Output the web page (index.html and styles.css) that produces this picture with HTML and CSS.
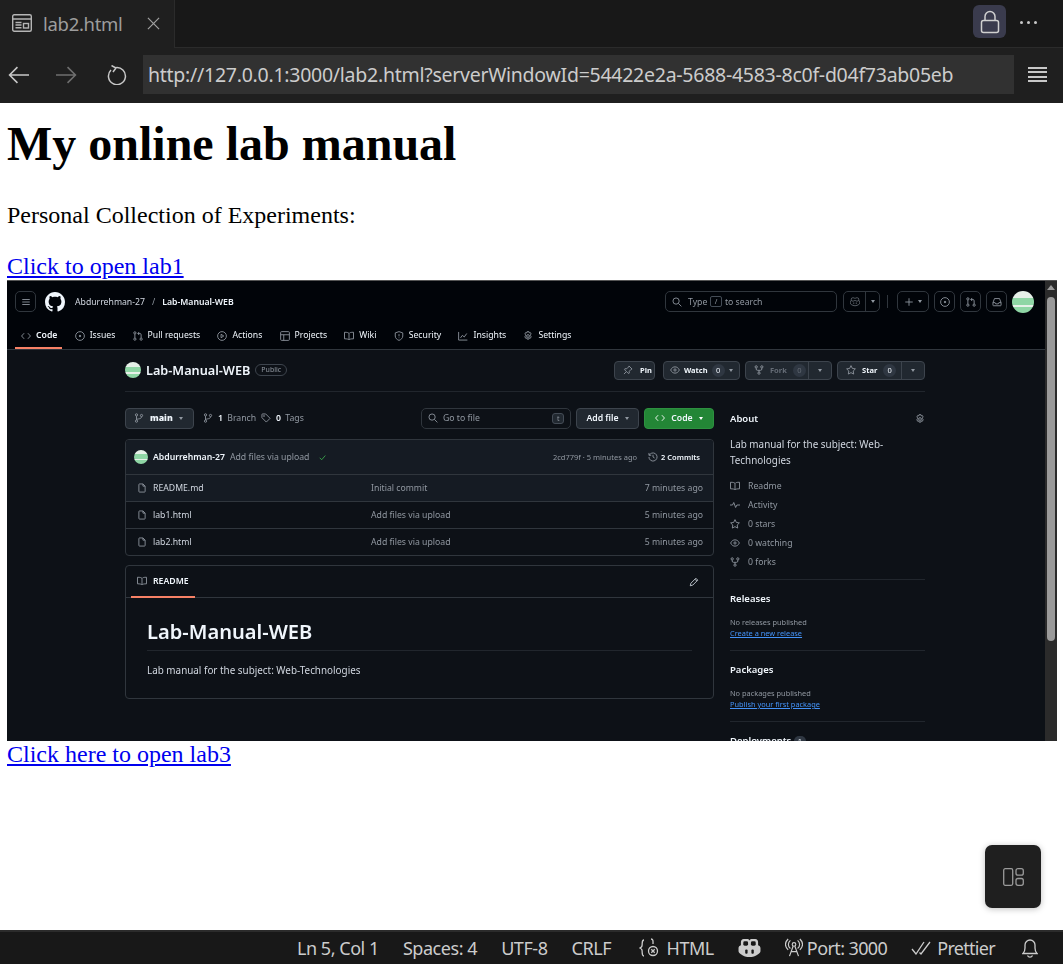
FILE: index.html
```html
<!DOCTYPE html>
<html lang="en">
<head>
    <meta charset="UTF-8">
    <meta name="viewport" content="width=device-width, initial-scale=1.0">
    <title>lab2.html</title>
    <link rel="stylesheet" href="styles.css">
</head>
<body>

<!-- icon sprite -->
<svg class="sprite" xmlns="http://www.w3.org/2000/svg">
    <symbol id="i-menu" viewBox="0 0 16 16"><path d="M2 4h12M2 8h12M2 12h12"/></symbol>
    <symbol id="i-code" viewBox="0 0 16 16"><path d="M5 3.5.9 8 5 12.5M11 3.5 15.1 8 11 12.5"/></symbol>
    <symbol id="i-issue" viewBox="0 0 16 16"><circle cx="8" cy="8" r="7"/><circle cx="8" cy="8" r="1.2" class="dot"/></symbol>
    <symbol id="i-pr" viewBox="0 0 16 16"><circle cx="3" cy="3" r="1.8"/><circle cx="3" cy="13" r="1.8"/><circle cx="13" cy="13" r="1.8"/><path d="M3 5v6M13 11V6a2 2 0 0 0-2-2H8M10 1.5 7.5 4l2.5 2.5"/></symbol>
    <symbol id="i-play" viewBox="0 0 16 16"><circle cx="8" cy="8" r="7"/><path d="M6.5 5.2 10.8 8l-4.3 2.8z"/></symbol>
    <symbol id="i-table" viewBox="0 0 16 16"><rect x="1" y="1" width="14" height="14" rx="1.5"/><path d="M1 6h14M6 6v9"/></symbol>
    <symbol id="i-book" viewBox="0 0 16 16"><path d="M8 4C7 2.5 5 2 .8 2v10.5c4 0 6 .5 7.2 1.5 1.2-1 3.2-1.5 7.2-1.5V2C11 2 9 2.5 8 4zM8 4v10"/></symbol>
    <symbol id="i-shield" viewBox="0 0 16 16"><path d="M8 1l6 2v5c0 3.5-3 6-6 7-3-1-6-3.5-6-7V3zM8 5v3.5M8 10.5v1"/></symbol>
    <symbol id="i-graph" viewBox="0 0 16 16"><path d="M1 1.5V14.5H15M4 11l3-4 3 2.5L14 4"/></symbol>
    <symbol id="i-gear" viewBox="0 0 16 16"><circle cx="8" cy="8" r="2.2"/><path d="M6.6 1h2.8l.5 2 1.8-.6 1.4 2.4-1.4 1.4v1.6l1.4 1.4-1.4 2.4-1.8-.6-.5 2H6.6l-.5-2-1.8.6-1.4-2.4 1.4-1.4V6.2L2.9 4.8l1.4-2.4 1.8.6z"/></symbol>
    <symbol id="i-search" viewBox="0 0 16 16"><circle cx="6.5" cy="6.5" r="5"/><path d="M10.3 10.3 15 15"/></symbol>
    <symbol id="i-pin" viewBox="0 0 16 16"><path d="M9.5 1.5l5 5-1.5.5-3 3v3l-1.5.5-6-6 .5-1.5h3l3-3zM5 11l-3.5 3.5"/></symbol>
    <symbol id="i-eye" viewBox="0 0 16 16"><path d="M1 8c2-4 4.5-5 7-5s5 1 7 5c-2 4-4.5 5-7 5s-5-1-7-5z"/><circle cx="8" cy="8" r="1.8"/></symbol>
    <symbol id="i-fork" viewBox="0 0 16 16"><circle cx="3.5" cy="3" r="1.8"/><circle cx="12.5" cy="3" r="1.8"/><circle cx="8" cy="13" r="1.8"/><path d="M3.5 5v1.5a2 2 0 0 0 2 2h5a2 2 0 0 0 2-2V5M8 8.5V11"/></symbol>
    <symbol id="i-star" viewBox="0 0 16 16"><path d="M8 1l2.2 4.5 4.8.7-3.5 3.4.8 4.9L8 12.2l-4.3 2.3.8-4.9L1 6.2l4.8-.7z"/></symbol>
    <symbol id="i-branch" viewBox="0 0 16 16"><circle cx="4" cy="3" r="1.8"/><circle cx="4" cy="13" r="1.8"/><circle cx="12" cy="4" r="1.8"/><path d="M4 5v6M12 6c0 3-3 3-5 3.5-1.5.4-3 .5-3 1.5"/></symbol>
    <symbol id="i-tag" viewBox="0 0 16 16"><path d="M1.5 2.5a1 1 0 0 1 1-1h5l7 7-6 6-7-7z"/><circle cx="4.8" cy="4.8" r=".7"/></symbol>
    <symbol id="i-file" viewBox="0 0 16 16"><path d="M3 2.5a1 1 0 0 1 1-1h5.500L13 5v8.500a1 1 0 0 1-1 1H4a1 1 0 0 1-1-1zM9.500 1.500V5H13"/></symbol>
    <symbol id="i-history" viewBox="0 0 16 16"><path d="M1.5 8a6.5 6.5 0 1 0 2-4.700L1.500 5.200M1.500 1.500v3.700h3.700M8 4.500V8l2.500 1.500"/></symbol>
    <symbol id="i-pencil" viewBox="0 0 16 16"><path d="M2 14l1-4 8-8 3 3-8 8zM9.500 3.500l3 3"/></symbol>
    <symbol id="i-pulse" viewBox="0 0 16 16"><path d="M0 8h4l2-4 3 8 2-4h5"/></symbol>
    <symbol id="i-check" viewBox="0 0 16 16"><path d="M3 8.500 6.500 12 13 4.500"/></symbol>
    <symbol id="i-copilot" viewBox="0 0 24 22"><path d="M6 1h3.500c1 0 2 .5 2.500 1.500.5-1 1.500-1.500 2.500-1.500H18c2 0 3 1.500 3 3.500v3c1.500.5 2.500 1.500 2.500 3v3c0 1.500-1 2.500-2.500 3.500-2.500 2-6 3-9 3s-6.500-1-9-3c-1.500-1-2.500-2-2.500-3.500v-3c0-1.500 1-2.500 2.500-3v-3C3 2.500 4 1 6 1zM3 7.500C5 9.500 10 9.500 12 6.500c2 3 7 3 9 1M9 12v4M15 12v4"/></symbol>
    <symbol id="i-inbox" viewBox="0 0 16 16"><path d="M1.5 9 4 2.500h8L14.500 9v4a1 1 0 0 1-1 1h-11a1 1 0 0 1-1-1zM1.500 9H5l1 2h4l1-2h3.500"/></symbol>
    <symbol id="i-plus" viewBox="0 0 16 16"><path d="M8 2v12M2 8h12"/></symbol>
</svg>

<header class="tabbar">
    <div class="tab">
        <svg class="tab-icon" viewBox="0 0 20 18"><rect x=".7" y=".7" width="18.6" height="16.6" rx="1.5"/><path d="M1 5h18M3.500 8.500h6M3.500 11h6M3.500 13.800h6"/><rect x="11.5" y="9.5" width="5" height="4.5"/></svg>
        <span class="tab-title">lab2.html</span>
        <svg class="tab-close" viewBox="0 0 14 14"><path d="M1 1l12 12M13 1 1 13"/></svg>
    </div>
    <div class="tab-fill">
        <button class="lock-btn">
            <svg viewBox="0 0 20 24"><rect x="1.5" y="10.5" width="17" height="12" rx="2"/><path d="M5 10.500V6.500a5 5 0 0 1 10 0v4"/></svg>
        </button>
        <div class="more-dots"><i></i><i></i><i></i></div>
    </div>
</header>

<nav class="toolbar">
    <svg class="nav-icon" viewBox="0 0 20 18"><path d="M20 9H1.500M9 1.500 1.500 9 9 16.500"/></svg>
    <svg class="nav-icon nav-off" viewBox="0 0 20 18"><path d="M0 9h18.500M11 1.500 18.500 9 11 16.500"/></svg>
    <svg class="nav-icon" viewBox="0 0 20 20"><path d="M3.500 5A8.500 8.500 0 1 0 8 2.700M4 .5 8.500 3 5.500 7"/></svg>
    <div class="url-box">http://127.0.0.1:3000/lab2.html?serverWindowId=54422e2a-5688-4583-8c0f-d04f73ab05eb</div>
    <div class="burger"><i></i><i></i><i></i><i></i></div>
</nav>

<main class="page">
    <h1>My online lab manual</h1>
    <p>Personal Collection of Experiments:</p>
    <a class="page-link" href="#">Click to open lab1</a>

    <!-- the embedded screenshot of the repository -->
    <div class="shot">
        <div class="gh">
            <div class="gh-head">
                <div class="gh-top">
                    <span class="square"><svg class="ic"><use href="#i-menu"/></svg></span>
                    <svg class="gh-logo" viewBox="0 0 16 16"><path d="M8 0c4.420 0 8 3.580 8 8a8.013 8.013 0 0 1-5.450 7.590c-.4.08-.55-.17-.55-.38 0-.27.01-1.130.01-2.200 0-.75-.25-1.230-.54-1.480 1.780-.2 3.650-.88 3.650-3.950 0-.88-.31-1.590-.82-2.150.08-.2.36-1.020-.08-2.120 0 0-.67-.22-2.200.82-.64-.18-1.320-.27-2-.27-.68 0-1.360.09-2 .27-1.530-1.030-2.200-.82-2.200-.82-.44 1.100-.16 1.920-.08 2.120-.51.56-.82 1.280-.82 2.150 0 3.060 1.860 3.750 3.640 3.950-.23.2-.44.55-.51 1.070-.46.21-1.610.55-2.330-.66-.15-.24-.6-.83-1.230-.82-.67.01-.27.38.01.53.34.19.73.9.82 1.130.16.45.68 1.310 2.690.94 0 .67.01 1.300.01 1.490 0 .21-.15.45-.55.38A7.995 7.995 0 0 1 0 8c0-4.420 3.580-8 8-8Z"/></svg>
                    <span class="crumb">Abdurrehman-27</span>
                    <span class="crumb-sep">/</span>
                    <span class="crumb crumb-repo">Lab-Manual-WEB</span>
                    <div class="top-right">
                        <div class="top-search"><svg class="ic"><use href="#i-search"/></svg><span>Type</span><kbd>/</kbd><span>to search</span></div>
                        <div class="split-btn"><span class="split-main"><svg class="ic"><use href="#i-copilot"/></svg></span><span class="split-drop"><i class="caret"></i></span></div>
                        <span class="top-divider"></span>
                        <span class="square square-plus"><svg class="ic"><use href="#i-plus"/></svg><i class="caret"></i></span>
                        <span class="square"><svg class="ic"><use href="#i-issue"/></svg></span>
                        <span class="square"><svg class="ic"><use href="#i-pr"/></svg></span>
                        <span class="square"><svg class="ic"><use href="#i-inbox"/></svg></span>
                        <span class="avatar avatar-big"></span>
                    </div>
                </div>
                <div class="gh-nav">
                    <span class="nav-item active"><svg class="ic"><use href="#i-code"/></svg>Code</span>
                    <span class="nav-item"><svg class="ic"><use href="#i-issue"/></svg>Issues</span>
                    <span class="nav-item"><svg class="ic"><use href="#i-pr"/></svg>Pull requests</span>
                    <span class="nav-item"><svg class="ic"><use href="#i-play"/></svg>Actions</span>
                    <span class="nav-item"><svg class="ic"><use href="#i-table"/></svg>Projects</span>
                    <span class="nav-item"><svg class="ic"><use href="#i-book"/></svg>Wiki</span>
                    <span class="nav-item"><svg class="ic"><use href="#i-shield"/></svg>Security</span>
                    <span class="nav-item"><svg class="ic"><use href="#i-graph"/></svg>Insights</span>
                    <span class="nav-item"><svg class="ic"><use href="#i-gear"/></svg>Settings</span>
                </div>
            </div>

            <div class="gh-wrap">
                <div class="repo-head">
                    <span class="avatar"></span>
                    <span class="repo-name">Lab-Manual-WEB</span>
                    <span class="badge">Public</span>
                    <div class="repo-actions">
                        <span class="rbtn rbtn-pin"><svg class="ic"><use href="#i-pin"/></svg>Pin</span>
                        <span class="rbtn rbtn-watch"><svg class="ic"><use href="#i-eye"/></svg>Watch<b class="count">0</b><i class="caret"></i></span>
                        <span class="rbtn rbtn-fork"><span class="rbtn-main"><svg class="ic"><use href="#i-fork"/></svg>Fork<b class="count">0</b></span><span class="rbtn-drop"><i class="caret"></i></span></span>
                        <span class="rbtn rbtn-star"><span class="rbtn-main"><svg class="ic"><use href="#i-star"/></svg>Star<b class="count">0</b></span><span class="rbtn-drop"><i class="caret"></i></span></span>
                    </div>
                </div>

                <div class="columns">
                    <div class="col-main">
                        <div class="branch-row">
                            <span class="btn btn-main"><svg class="ic"><use href="#i-branch"/></svg><strong>main</strong><i class="caret"></i></span>
                            <span class="meta meta-branch"><svg class="ic"><use href="#i-branch"/></svg><strong>1</strong> Branch</span>
                            <span class="meta"><svg class="ic"><use href="#i-tag"/></svg><strong>0</strong> Tags</span>
                            <div class="goto"><svg class="ic"><use href="#i-search"/></svg><span>Go to file</span><kbd>t</kbd></div>
                            <span class="btn btn-add">Add file<i class="caret"></i></span>
                            <span class="btn btn-code"><svg class="ic"><use href="#i-code"/></svg>Code<i class="caret"></i></span>
                        </div>

                        <div class="files">
                            <div class="commit-row">
                                <span class="avatar avatar-small"></span>
                                <span class="commit-user">Abdurrehman-27</span>
                                <span class="commit-msg">Add files via upload</span>
                                <svg class="ic ic-ok"><use href="#i-check"/></svg>
                                <span class="commit-hash">2cd779f · 5 minutes ago</span>
                                <span class="commit-count"><svg class="ic"><use href="#i-history"/></svg>2 Commits</span>
                            </div>
                            <div class="file-row file-row-lit">
                                <span class="file-name"><svg class="ic"><use href="#i-file"/></svg>README.md</span>
                                <span class="file-msg">Initial commit</span>
                                <span class="file-age">7 minutes ago</span>
                            </div>
                            <div class="file-row">
                                <span class="file-name"><svg class="ic"><use href="#i-file"/></svg>lab1.html</span>
                                <span class="file-msg">Add files via upload</span>
                                <span class="file-age">5 minutes ago</span>
                            </div>
                            <div class="file-row">
                                <span class="file-name"><svg class="ic"><use href="#i-file"/></svg>lab2.html</span>
                                <span class="file-msg">Add files via upload</span>
                                <span class="file-age">5 minutes ago</span>
                            </div>
                        </div>

                        <div class="readme">
                            <div class="readme-tabs">
                                <span class="readme-tab"><svg class="ic"><use href="#i-book"/></svg>README</span>
                                <svg class="ic ic-pencil"><use href="#i-pencil"/></svg>
                            </div>
                            <div class="readme-body">
                                <h2>Lab-Manual-WEB</h2>
                                <p>Lab manual for the subject: Web-Technologies</p>
                            </div>
                        </div>
                    </div>

                    <aside class="col-side">
                        <div class="about-head"><h3>About</h3><svg class="ic"><use href="#i-gear"/></svg></div>
                        <p class="about-text">Lab manual for the subject: Web-Technologies</p>
                        <ul class="about-list">
                            <li><svg class="ic"><use href="#i-book"/></svg>Readme</li>
                            <li><svg class="ic"><use href="#i-pulse"/></svg>Activity</li>
                            <li><svg class="ic"><use href="#i-star"/></svg>0 stars</li>
                            <li><svg class="ic"><use href="#i-eye"/></svg>0 watching</li>
                            <li><svg class="ic"><use href="#i-fork"/></svg>0 forks</li>
                        </ul>
                        <div class="side-block">
                            <h3>Releases</h3>
                            <small>No releases published</small>
                            <a href="#">Create a new release</a>
                        </div>
                        <div class="side-block">
                            <h3>Packages</h3>
                            <small>No packages published</small>
                            <a href="#">Publish your first package</a>
                        </div>
                        <div class="side-block">
                            <h3>Deployments <b class="count">1</b></h3>
                        </div>
                    </aside>
                </div>
            </div>
        </div>
        <div class="shot-scroll"><span class="shot-thumb"></span></div>
    </div>

    <a class="page-link" href="#">Click here to open lab3</a>

    <button class="float-btn">
        <svg viewBox="0 0 21 18"><rect x=".7" y=".7" width="9" height="16.6" rx="1.5"/><rect x="13" y=".7" width="7.3" height="6.5" rx="2"/><rect x="13" y="10.5" width="7.3" height="6.8" rx="2"/></svg>
    </button>
</main>

<footer class="statusbar">
    <span>Ln 5, Col 1</span>
    <span>Spaces: 4</span>
    <span>UTF-8</span>
    <span>CRLF</span>
    <span class="st-lang">
        <svg viewBox="0 0 20 22"><path d="M5 3C2.500 3 3.500 6 3 9c-.2 1-1 1.500-2 2 1 .5 1.800 1 2 2 .5 3-.5 6 2 6M12 2c2.500 0 2 2.500 2 5"/><circle cx="14" cy="14" r="4.500"/><path d="M12.300 12.300l3.400 3.400M15.700 12.300l-3.400 3.400"/></svg>
        HTML
    </span>
    <svg class="st-copilot" viewBox="0 0 24 22">
        <path d="M6 1h3.500c1 0 2 .5 2.500 1.500.5-1 1.500-1.500 2.500-1.500H18c2 0 3 1.500 3 3.500v3c1.500.5 2.500 1.500 2.500 3v3c0 1.500-1 2.500-2.500 3.500-2.500 2-6 3-9 3s-6.500-1-9-3c-1.500-1-2.500-2-2.500-3.500v-3c0-1.500 1-2.500 2.500-3v-3C3 2.500 4 1 6 1z"/>
        <rect class="st-hole" x="5.5" y="3.5" width="5" height="4.5" rx="1.5"/>
        <rect class="st-hole" x="13.5" y="3.5" width="5" height="4.5" rx="1.5"/>
        <rect class="st-hole" x="7.5" y="12" width="2.5" height="4.5" rx="1"/>
        <rect class="st-hole" x="14" y="12" width="2.5" height="4.5" rx="1"/>
    </svg>
    <span class="st-port">
        <svg viewBox="0 0 20 20"><circle cx="10" cy="6" r="2"/><path d="M9 8 5 19M11 8l4 11M7 14h6M6 1.500C3 4 3 8 6 10.500M14 1.500c3 2.500 3 6.500 0 9M3.500 0C-.5 4-.5 8 3.500 12M16.500 0c4 4 4 8 0 12"/></svg>
        Port: 3000
    </span>
    <span class="st-prettier">
        <svg viewBox="0 0 20 14"><path d="M1 8l4 5L13 1M8.500 11.500 10 13 19 1"/></svg>
        Prettier
    </span>
    <svg class="st-bell" viewBox="0 0 16 20"><path d="M1 15.500c1.500-1.500 2-3 2-5.500V7a5 5 0 0 1 10 0v3c0 2.500.5 4 2 5.500zM5.500 17.500a2.800 2.800 0 0 0 5 0"/></svg>
</footer>

</body>
</html>
```

FILE: styles.css
```css
* {
    box-sizing: border-box;
}
body {
    margin: 0;
    height: 100vh;
    display: flex;
    flex-direction: column;
    overflow: hidden;
    background: #fff;
    font-family: "Liberation Serif", serif;
}
.sprite {
    display: none;
}

/* editor chrome */
.tabbar {
    height: 48px;
    display: flex;
    background: #181818;
    font-family: "Noto Sans", sans-serif;
}
.tab {
    width: 175px;
    display: flex;
    align-items: center;
    padding: 0 0 2px 12px;
    background: #1f1f1f;
    border-right: 1px solid #2b2b2b;
}
.tab-icon {
    width: 20px;
    height: 18px;
    fill: none;
    stroke: #b5b5b5;
    stroke-width: 1.4;
}
.tab-title {
    margin-left: 11px;
    font-size: 18.5px;
    letter-spacing: -0.3px;
    color: #9d9d9d;
}
.tab-close {
    width: 13px;
    height: 13px;
    margin-left: 24px;
    fill: none;
    stroke: #a0a0a0;
    stroke-width: 1.3;
}
.tab-fill {
    flex: 1;
    display: flex;
    justify-content: flex-end;
    align-items: flex-start;
    border-bottom: 1px solid #2b2b2b;
    padding: 5px 26px 0 0;
}
.lock-btn {
    width: 33px;
    height: 33px;
    padding: 0;
    display: flex;
    align-items: center;
    justify-content: center;
    border: none;
    border-radius: 6px;
    background: #3a3b4d;
}
.lock-btn svg {
    width: 20px;
    height: 24px;
    fill: none;
    stroke: #d0d0d0;
    stroke-width: 1.5;
}
.more-dots {
    display: flex;
    gap: 4px;
    margin: 16px 0 0 14px;
}
.more-dots i {
    width: 3px;
    height: 3px;
    border-radius: 50%;
    background: #c8c8c8;
}
.toolbar {
    height: 55px;
    display: flex;
    align-items: center;
    padding: 0 16px 2px 8px;
    background: #1f1f1f;
}
.nav-icon {
    width: 21px;
    height: 20px;
    margin-right: 27px;
    flex: none;
    fill: none;
    stroke: #c8c8c8;
    stroke-width: 1.5;
}
.nav-off {
    margin-right: 30px;
    stroke: #6f6f6f;
}
.toolbar .nav-icon:nth-child(3) {
    margin-right: 15px;
}
.url-box {
    width: 871px;
    height: 39px;
    padding-left: 5px;
    line-height: 40px;
    white-space: nowrap;
    overflow: hidden;
    background: #313131;
    color: #cccccc;
    font-family: "Noto Sans", sans-serif;
    font-size: 19.5px;
    letter-spacing: -0.26px;
}
.burger {
    margin-left: 14px;
    width: 19px;
    display: flex;
    flex-direction: column;
    gap: 2.5px;
}
.burger i {
    height: 2px;
    background: #c8c8c8;
}

/* page content */
.page {
    position: relative;
    flex: 1;
    min-height: 0;
    padding: 13px 0 0 7px;
    background: #fff;
    color: #000;
}
.page h1 {
    margin: 0;
    font-size: 48px;
    font-weight: bold;
}
.page > p {
    margin: 31px 0 24px;
    font-size: 24px;
}
.page-link {
    display: block;
    width: max-content;
    font-size: 24px;
    color: #0000ee;
}

/* embedded screenshot */
.shot {
    width: 1050px;
    height: 461px;
    display: flex;
    overflow: hidden;
    border-top: 1px solid #555;
    background: #0d1117;
    color: #f0f6fc;
    font-family: "Noto Sans", sans-serif;
    font-size: 8.7px;
    filter: blur(0.25px);
}
.shot-scroll {
    width: 12px;
    flex: none;
    background: #2b2b2b;
}
.shot-scroll::before {
    content: "";
    display: block;
    width: 0;
    margin: 4px auto 0;
    border: 4px solid transparent;
    border-top: 0;
    border-bottom: 5px solid #9a9a9a;
}
.shot-thumb {
    display: block;
    width: 8px;
    height: 344px;
    margin: 7px 0 0 2px;
    border-radius: 4px;
    background: #9a9a9a;
}
.gh {
    flex: 1;
    min-width: 0;
}
.ic {
    width: 10px;
    height: 10px;
    flex: none;
    fill: none;
    stroke: #9198a1;
    stroke-width: 1.4;
}
.dot {
    fill: #9198a1;
}
.caret {
    flex: none;
    width: 0;
    height: 0;
    border: 2.5px solid transparent;
    border-top: 3px solid #9198a1;
    border-bottom: 0;
}
.gh-head {
    height: 69px;
    background: #010409;
    border-bottom: 1px solid #30363d;
}
.gh-top {
    height: 41px;
    display: flex;
    align-items: center;
    padding: 0 11px 0 8px;
}
.square {
    width: 21px;
    height: 21px;
    display: flex;
    align-items: center;
    justify-content: center;
    flex: none;
    border: 1px solid #30363d;
    border-radius: 5px;
}
.gh-logo {
    width: 20px;
    height: 20px;
    margin: 0 10px 0 9px;
    fill: #f0f6fc;
}
.crumb {
    color: #d1d7e0;
}
.crumb-sep {
    margin: 0 7px;
    color: #9198a1;
}
.crumb-repo {
    font-weight: 600;
    color: #f0f6fc;
}
.top-right {
    margin-left: auto;
    display: flex;
    align-items: center;
    gap: 5px;
}
.top-search {
    width: 172px;
    height: 21px;
    display: flex;
    align-items: center;
    gap: 3px;
    padding-left: 6px;
    border: 1px solid #30363d;
    border-radius: 5px;
    color: #9198a1;
}
.top-search .ic {
    margin-right: 3px;
}
kbd {
    font-family: "Noto Sans", sans-serif;
    font-size: 7px;
    border: 1px solid #444c56;
    border-radius: 2px;
    padding: 0 3.5px;
    color: #9198a1;
}
.split-btn {
    width: 37px;
    height: 21px;
    margin-left: 1px;
    display: flex;
    border: 1px solid #30363d;
    border-radius: 5px;
}
.split-main {
    width: 22px;
    display: flex;
    align-items: center;
    justify-content: center;
    border-right: 1px solid #30363d;
}
.split-drop {
    flex: 1;
    display: flex;
    align-items: center;
    justify-content: center;
}
.top-divider {
    width: 1px;
    height: 13px;
    margin: 0 4px 0 2px;
    background: #30363d;
}
.square-plus {
    width: 32px;
    gap: 4px;
}
.avatar {
    display: block;
    flex: none;
    width: 16px;
    height: 16px;
    border-radius: 50%;
    background: linear-gradient(#e6f0e8 0 30%, #8fd6a5 30% 62%, #e6f0e8 62% 72%, #8fd6a5 72%);
}
.avatar-big {
    width: 22px;
    height: 22px;
}
.avatar-small {
    width: 14px;
    height: 14px;
}
.gh-nav {
    height: 27px;
    display: flex;
    padding-left: 8px;
    gap: 6.2px;
}
.nav-item {
    display: flex;
    align-items: flex-start;
    gap: 5px;
    height: 27px;
    padding: 8px 5px 0 6px;
    color: #f0f6fc;
    white-space: nowrap;
    line-height: 11px;
}
.nav-item .ic {
    margin-top: .5px;
}
.nav-item.active {
    font-weight: 600;
    border-bottom: 2px solid #f78166;
}
.gh-wrap {
    padding: 0 120px 0 118px;
}
.repo-head {
    height: 42px;
    display: flex;
    align-items: center;
    border-bottom: 1px solid #21262d;
    padding-bottom: 1px;
}
.repo-name {
    margin-left: 5px;
    font-size: 12.7px;
    font-weight: 600;
}
.badge {
    margin-left: 5px;
    padding: 0 5px;
    font-size: 7px;
    line-height: 10px;
    border: 1px solid #3d444d;
    border-radius: 6px;
    color: #9198a1;
}
.repo-actions {
    margin-left: auto;
    display: flex;
    gap: 5px;
}
.rbtn {
    height: 19px;
    flex: none;
    display: flex;
    align-items: center;
    gap: 4px;
    padding: 0 6px;
    background: #212830;
    border: 1px solid #3d444d;
    border-radius: 4px;
    font-size: 7.5px;
    font-weight: 700;
}
.rbtn-pin {
    width: 41px;
    margin-right: 3px;
    gap: 7px;
    padding-left: 8px;
}
.rbtn-watch {
    width: 77px;
}
.rbtn-fork {
    width: 87px;
    padding: 0;
    gap: 0;
    color: #656c76;
}
.rbtn-star {
    width: 88px;
    padding: 0;
    gap: 0;
}
.rbtn-main {
    flex: 1;
    height: 100%;
    display: flex;
    align-items: center;
    gap: 6px;
    padding-left: 8px;
    border-right: 1px solid #3d444d;
}
.rbtn-drop {
    width: 22px;
    display: flex;
    justify-content: center;
}
.count {
    min-width: 13px;
    height: 13px;
    line-height: 13px;
    padding: 0 4px;
    text-align: center;
    border-radius: 7px;
    background: #2f3742;
    color: #f0f6fc;
    font-size: 7.5px;
    font-weight: 400;
}
.rbtn-fork .count {
    color: #656c76;
}
.columns {
    display: flex;
    justify-content: space-between;
}
.col-main {
    width: 589px;
    padding-top: 15px;
}
.branch-row {
    height: 22px;
    display: flex;
    align-items: center;
}
.btn {
    height: 21px;
    display: flex;
    align-items: center;
    gap: 6px;
    padding: 0 8px;
    border: 1px solid #3d444d;
    border-radius: 4px;
    background: #212830;
    font-weight: 600;
}
.btn-main {
    width: 69px;
}
.meta {
    display: flex;
    align-items: center;
    gap: 5px;
    color: #9198a1;
    white-space: pre;
}
.meta strong {
    margin-right: -3px;
    color: #f0f6fc;
    font-weight: 600;
}
.meta-branch {
    margin: 0 5px 0 9px;
}
.goto {
    margin-left: auto;
    width: 150px;
    height: 21px;
    display: flex;
    align-items: center;
    gap: 5px;
    padding: 0 6px;
    border: 1px solid #30363d;
    border-radius: 5px;
    color: #9198a1;
}
.goto kbd {
    margin-left: auto;
    background: #212830;
    border-radius: 3px;
}
.btn-add {
    width: 63px;
    margin-left: 5px;
    justify-content: center;
}
.btn-code {
    width: 70px;
    margin-left: 5px;
    justify-content: center;
    background: #238636;
    border-color: #2d9140;
}
.btn-code .ic {
    stroke: #fff;
}
.btn-code .caret {
    border-top-color: #fff;
}
.files {
    margin-top: 10px;
    border: 1px solid #30363d;
    border-radius: 4px;
    overflow: hidden;
}
.commit-row {
    height: 34px;
    display: flex;
    align-items: center;
    padding: 0 13px 0 8px;
    background: #151b23;
}
.commit-user {
    margin-left: 5px;
    font-weight: 600;
}
.commit-msg {
    margin-left: 5px;
    color: #9198a1;
}
.ic-ok {
    width: 9px;
    height: 9px;
    margin-left: 9px;
    stroke: #3fb950;
}
.commit-hash {
    margin-left: auto;
    color: #9198a1;
    font-size: 7.5px;
}
.commit-count {
    display: flex;
    align-items: center;
    gap: 3px;
    margin-left: 11px;
    font-size: 7.5px;
    font-weight: 600;
}
.file-row {
    height: 27px;
    display: grid;
    grid-template-columns: 234px 1fr auto;
    align-items: center;
    padding: 0 10px 1px 11px;
    border-top: 1px solid #30363d;
    color: #9198a1;
}
.file-row-lit {
    background: #151b23;
}
.file-name {
    display: flex;
    align-items: center;
    gap: 6px;
    color: #d1d7e0;
}
.readme {
    margin-top: 9px;
    height: 134px;
    border: 1px solid #30363d;
    border-radius: 4px;
}
.readme-tabs {
    height: 32px;
    display: flex;
    align-items: center;
    justify-content: space-between;
    padding: 0 14px 0 5px;
    border-bottom: 1px solid #30363d;
}
.readme-tab {
    width: 64px;
    height: 32px;
    display: flex;
    align-items: center;
    gap: 6px;
    padding-left: 6px;
    border-bottom: 2px solid #f78166;
    font-weight: 600;
}
.ic-pencil {
    stroke: #c9d1d9;
}
.readme-body {
    padding: 20px 21px 0;
}
.readme-body h2 {
    margin: 0;
    padding-bottom: 5px;
    border-bottom: 1px solid #21262d;
    font-size: 20.1px;
    font-weight: 600;
    line-height: 27px;
}
.readme-body p {
    margin: 12px 0 0;
    font-size: 9.9px;
    color: #d1d7e0;
}
.col-side {
    width: 195px;
    padding-top: 20px;
}
.about-head {
    display: flex;
    align-items: center;
    justify-content: space-between;
}
.col-side h3 {
    margin: 0;
    font-size: 9.5px;
    font-weight: 600;
    line-height: 13px;
}
.about-text {
    margin: 11px 0 0;
    font-size: 9.9px;
    line-height: 16px;
    color: #d1d7e0;
}
.about-list {
    list-style: none;
    margin: 8px 0 0;
    padding: 0 0 8px;
    color: #9198a1;
    border-bottom: 1px solid #21262d;
}
.about-list li {
    height: 19px;
    display: flex;
    align-items: center;
    gap: 8px;
}
.side-block {
    padding: 12px 0 11px;
    border-bottom: 1px solid #21262d;
}
.side-block small {
    display: block;
    margin-top: 11px;
    font-size: 7.4px;
    line-height: 12px;
    color: #9198a1;
}
.side-block a {
    display: block;
    width: max-content;
    font-size: 7.4px;
    line-height: 11px;
    color: #4493f8;
    text-decoration: underline;
}

/* floating layout button */
.float-btn {
    position: absolute;
    left: 985px;
    top: 742px;
    width: 56px;
    height: 63px;
    padding: 0;
    display: flex;
    align-items: center;
    justify-content: center;
    border: none;
    border-radius: 7px;
    background: #1f1f1f;
    box-shadow: 0 1px 6px rgba(0, 0, 0, 0.25);
}
.float-btn svg {
    width: 21px;
    height: 18px;
    fill: none;
    stroke: #9a9a9a;
    stroke-width: 1.3;
}

/* status bar */
.statusbar {
    height: 34px;
    display: flex;
    align-items: center;
    justify-content: flex-end;
    gap: 24px;
    padding-right: 25px;
    background: #181818;
    border-top: 2px solid #2b2b2b;
    color: #cccccc;
    font-family: "Noto Sans", sans-serif;
    font-size: 18px;
    letter-spacing: -0.45px;
}
.statusbar svg {
    fill: none;
    stroke: #cccccc;
    stroke-width: 1.3;
}
.st-lang,
.st-port,
.st-prettier {
    display: flex;
    align-items: center;
    gap: 6px;
}
.st-lang {
    gap: 8px;
    margin-left: 3.5px;
}
.st-lang svg {
    width: 20px;
    height: 22px;
}
.statusbar .st-copilot {
    width: 23px;
    height: 21px;
    fill: #cccccc;
    stroke: none;
}
.statusbar .st-hole {
    fill: #181818;
}
.st-port {
    gap: 4px;
    letter-spacing: -0.6px;
}
.st-port svg {
    width: 18px;
    height: 20px;
}
.st-prettier {
    letter-spacing: -0.7px;
}
.st-prettier svg {
    width: 20px;
    height: 14px;
}
.st-bell {
    width: 16px;
    height: 20px;
    margin-left: 3px;
}
```
